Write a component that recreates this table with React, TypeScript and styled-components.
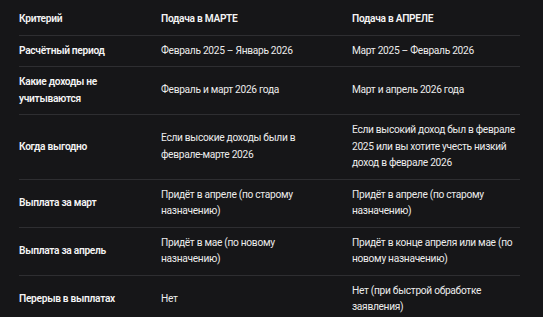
import React from 'react';
import styled, { createGlobalStyle } from 'styled-components';

const GlobalStyle = createGlobalStyle`
  html, body {
    margin: 0;
    padding: 0;
    background: #161618;
  }
  body {
    font-family: Roboto, 'Noto Sans', sans-serif;
  }
`;

const Wrapper = styled.div`
  padding: 2px 23px 0 19px;
  background: #161618;
  min-height: 317px;
  box-sizing: border-box;
`;

const Table = styled.table`
  width: 501px;
  border-collapse: collapse;
  table-layout: fixed;
  font-size: 10.2px;
  letter-spacing: -0.3px;
  line-height: 16.5px;
  color: #e6e6e6;
`;

const HeadCell = styled.th<{ w: number }>`
  box-sizing: border-box;
  width: ${(p) => p.w}px;
  text-align: left;
  font-weight: 600;
  padding: 8.5px 24px 7.5px 0;
  color: #f4f4f4;
  border-bottom: 1px solid #2e2e31;
  &:last-child {
    padding-right: 0;
  }
`;

const Row = styled.tr`
  border-bottom: 1px solid #2e2e31;
  &:last-child {
    border-bottom: none;
  }
`;

const Cell = styled.td<{ bold?: boolean }>`
  box-sizing: border-box;
  padding: 7px 24px 7px 0;
  vertical-align: middle;
  font-weight: ${(p) => (p.bold ? 600 : 400)};
  color: ${(p) => (p.bold ? '#f4f4f4' : '#ececec')};
  &:last-child {
    padding-right: 0;
  }
`;

const rows = [
  ['Расчётный период', 'Февраль 2025 – Январь 2026', 'Март 2025 – Февраль 2026'],
  ['Какие доходы не учитываются', 'Февраль и март 2026 года', 'Март и апрель 2026 года'],
  [
    'Когда выгодно',
    'Если высокие доходы были в феврале-марте 2026',
    'Если высокий доход был в феврале 2025 или вы хотите учесть низкий доход в феврале 2026',
  ],
  ['Выплата за март', 'Придёт в апреле (по старому назначению)', 'Придёт в апреле (по старому назначению)'],
  ['Выплата за апрель', 'Придёт в мае (по новому назначению)', 'Придёт в конце апреля или мае (по новому назначению)'],
  ['Перерыв в выплатах', 'Нет', 'Нет (при быстрой обработке заявления)'],
];

function App() {
  return (
    <Wrapper>
      <GlobalStyle />
      <Table>
        <thead>
          <tr>
            <HeadCell w={142}>Критерий</HeadCell>
            <HeadCell w={191}>Подача в МАРТЕ</HeadCell>
            <HeadCell w={168}>Подача в АПРЕЛЕ</HeadCell>
          </tr>
        </thead>
        <tbody>
          {rows.map((r) => (
            <Row key={r[0]}>
              <Cell bold>{r[0]}</Cell>
              <Cell>{r[1]}</Cell>
              <Cell>{r[2]}</Cell>
            </Row>
          ))}
        </tbody>
      </Table>
    </Wrapper>
  );
}

export default App;
